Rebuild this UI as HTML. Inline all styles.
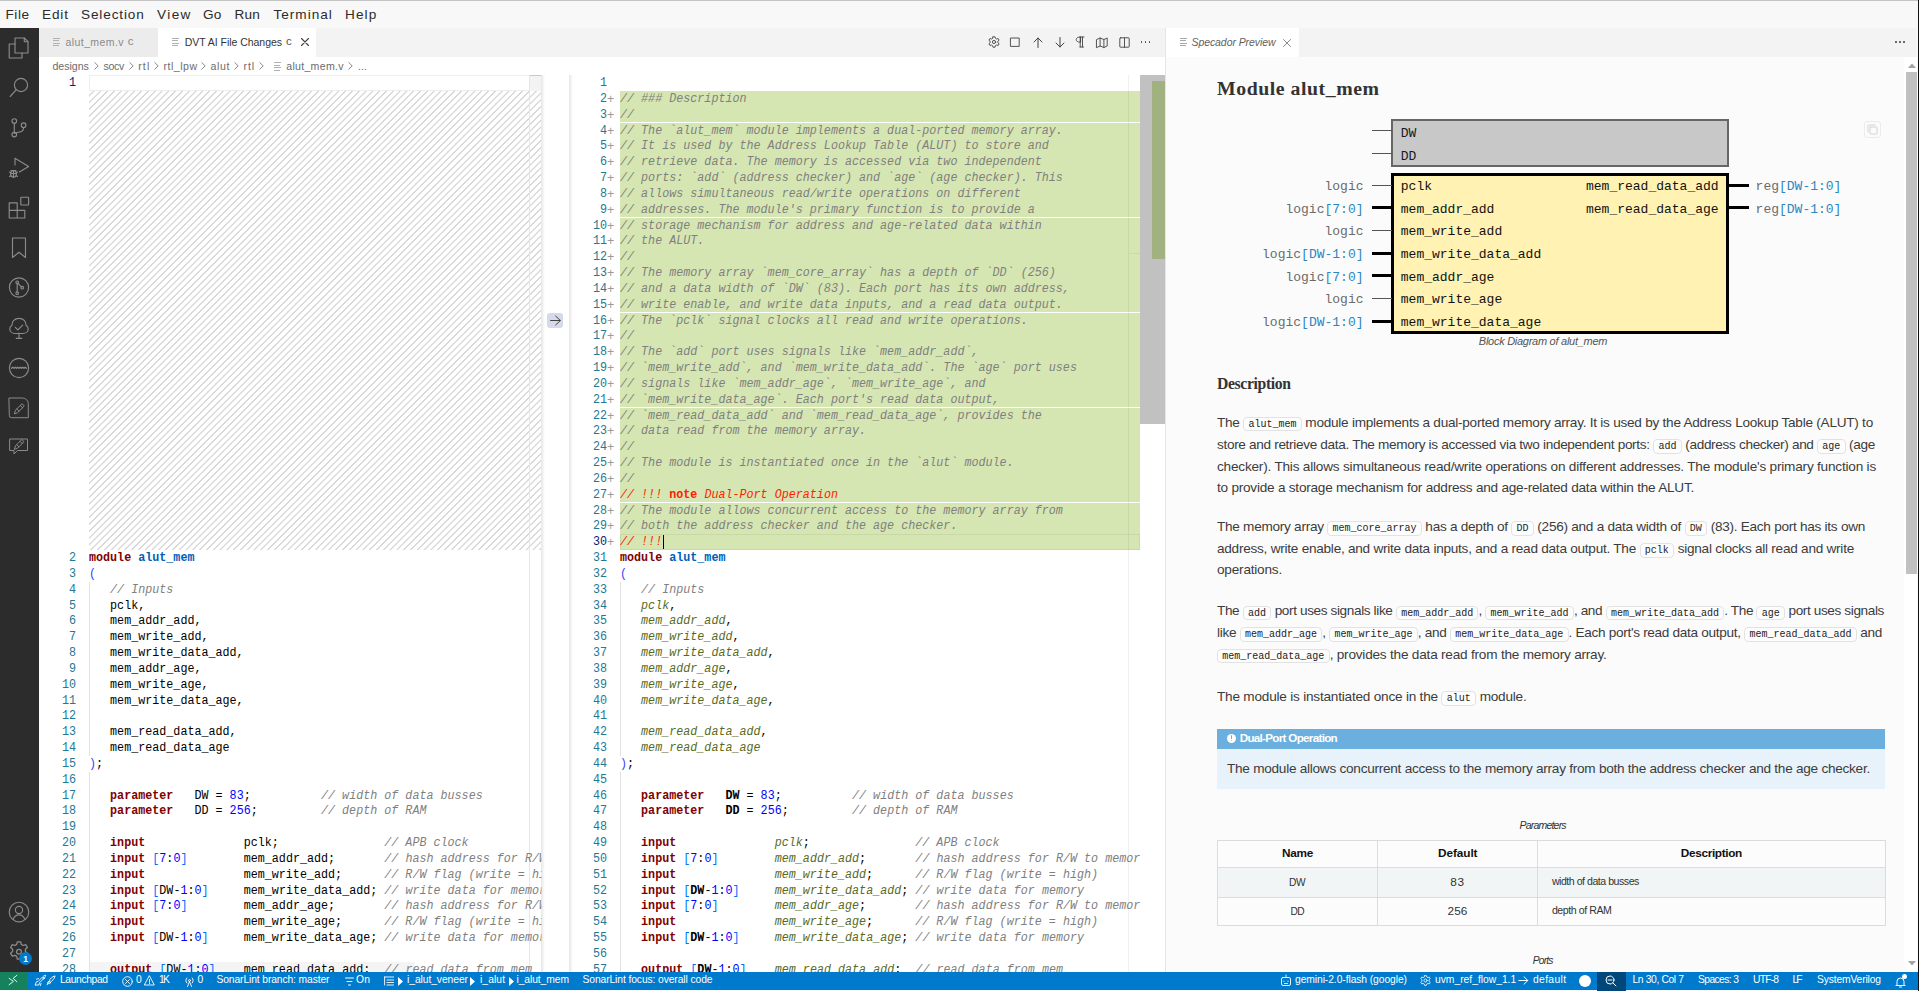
<!DOCTYPE html><html><head><meta charset="utf-8"><title>VS Code</title><style>
*{margin:0;padding:0;box-sizing:border-box}
html,body{width:1919px;height:991px;overflow:hidden;background:#fff;position:relative}
body{font-family:"Liberation Sans",sans-serif}
.t{position:absolute;white-space:pre}
.r{position:absolute}
.ln{position:absolute;height:15.8333px;line-height:15.8333px;text-align:right;font-family:"Liberation Mono",monospace;font-size:12.3px;padding-top:1px;transform:scaleX(0.9526);transform-origin:right center}
.pl{position:absolute;height:15.8333px;line-height:15.8333px;font-family:"Liberation Mono",monospace;font-size:12.8px;color:#9a9a9a;padding-top:1px;transform:scaleX(0.9526);transform-origin:left center}
.cl{position:absolute;height:15.8333px;line-height:15.8333px;white-space:pre;overflow:hidden;font-family:"Liberation Mono",monospace;font-size:12.3px;color:#000;padding-top:1px;transform:scaleX(0.9526);transform-origin:left center}
svg{position:absolute;overflow:visible}
.ic{font-family:'Liberation Mono',monospace;font-size:10px;border:1px solid #e2e2e2;border-radius:4px;background:#fdfdfd;padding:0.9px 4.3px;margin:0;color:#222;letter-spacing:0}
</style></head><body><div class="r" style="left:0.00px;top:0.00px;width:1919.00px;height:28.00px;background:#f8f8f8;"></div><div class="r" style="left:0.00px;top:0.00px;width:1919.00px;height:1.00px;background:#c4c4c4;"></div><div class="t" style="left:5.50px;top:7.13px;font-family:'Liberation Sans', sans-serif;font-size:13.60px;line-height:16.32px;color:#2b2b2b;font-weight:normal;font-style:normal;letter-spacing:0.531px">File</div><div class="t" style="left:42.00px;top:7.13px;font-family:'Liberation Sans', sans-serif;font-size:13.60px;line-height:16.32px;color:#2b2b2b;font-weight:normal;font-style:normal;letter-spacing:0.854px">Edit</div><div class="t" style="left:81.00px;top:7.13px;font-family:'Liberation Sans', sans-serif;font-size:13.60px;line-height:16.32px;color:#2b2b2b;font-weight:normal;font-style:normal;letter-spacing:0.860px">Selection</div><div class="t" style="left:157.00px;top:7.13px;font-family:'Liberation Sans', sans-serif;font-size:13.60px;line-height:16.32px;color:#2b2b2b;font-weight:normal;font-style:normal;letter-spacing:1.394px">View</div><div class="t" style="left:203.00px;top:7.13px;font-family:'Liberation Sans', sans-serif;font-size:13.60px;line-height:16.32px;color:#2b2b2b;font-weight:normal;font-style:normal;letter-spacing:0.259px">Go</div><div class="t" style="left:234.50px;top:7.13px;font-family:'Liberation Sans', sans-serif;font-size:13.60px;line-height:16.32px;color:#2b2b2b;font-weight:normal;font-style:normal;letter-spacing:0.181px">Run</div><div class="t" style="left:273.60px;top:7.13px;font-family:'Liberation Sans', sans-serif;font-size:13.60px;line-height:16.32px;color:#2b2b2b;font-weight:normal;font-style:normal;letter-spacing:0.961px">Terminal</div><div class="t" style="left:345.00px;top:7.13px;font-family:'Liberation Sans', sans-serif;font-size:13.60px;line-height:16.32px;color:#2b2b2b;font-weight:normal;font-style:normal;letter-spacing:1.110px">Help</div><div class="r" style="left:0.00px;top:28.00px;width:39.00px;height:944.00px;background:#2c2c2c;"></div><div class="r" style="left:39.00px;top:28.00px;width:1126.00px;height:29.00px;background:#f3f3f3;"></div><div class="r" style="left:39.00px;top:28.00px;width:118.70px;height:29.00px;background:#ececec;"></div><div class="r" style="left:157.70px;top:28.00px;width:158.00px;height:29.00px;background:#ffffff;"></div><div class="r" style="left:39.00px;top:57.00px;width:1126.00px;height:915.00px;background:#ffffff;"></div><div class="r" style="left:1165.00px;top:28.00px;width:1.00px;height:944.00px;background:#e5e5e5;"></div><div class="r" style="left:1166.00px;top:28.00px;width:753.00px;height:29.00px;background:#f3f3f3;"></div><div class="r" style="left:1166.00px;top:28.00px;width:132.80px;height:29.00px;background:#ffffff;"></div><div class="r" style="left:1166.00px;top:57.00px;width:753.00px;height:915.00px;background:#fbfbfb;"></div><div class="r" style="left:0.00px;top:972.00px;width:1919.00px;height:18.00px;background:#007acc;"></div><div class="r" style="left:0.00px;top:972.00px;width:27.00px;height:18.00px;background:#16825d;"></div><div class="r" style="left:0.00px;top:990.00px;width:1919.00px;height:1.00px;background:#f8f8f8;"></div><svg style="left:0.00px;top:28.00px" width="39" height="40" viewBox="0 0 39 40" fill="none" stroke="#8b8b8b" stroke-width="1.15" stroke-linecap="round" stroke-linejoin="round"><path d="M15 10h9.3l3.7 3.7V25H15z"/><path d="M24.3 10v3.7H28"/><path d="M15 16H9.2v14H22v-5"/></svg><svg style="left:0.00px;top:68.00px" width="39" height="40" viewBox="0 0 39 40" fill="none" stroke="#8b8b8b" stroke-width="1.15" stroke-linecap="round" stroke-linejoin="round"><circle cx="21" cy="17" r="6.6"/><path d="M16.3 21.7L10.2 28.5"/></svg><svg style="left:0.00px;top:108.00px" width="39" height="40" viewBox="0 0 39 40" fill="none" stroke="#8b8b8b" stroke-width="1.15" stroke-linecap="round" stroke-linejoin="round"><circle cx="14.3" cy="13" r="2.3"/><circle cx="14.3" cy="26.6" r="2.3"/><circle cx="23.6" cy="17.2" r="2.3"/><path d="M14.3 15.3v9M23.6 19.5c0 3.5-2.5 4.5-5 4.8-2 .2-3.5 .5-4 1"/></svg><svg style="left:0.00px;top:148.00px" width="39" height="40" viewBox="0 0 39 40" fill="none" stroke="#8b8b8b" stroke-width="1.15" stroke-linecap="round" stroke-linejoin="round"><path d="M15 17V10.2l13.6 8.2-9.2 5.6"/><path d="M11 22.6h5M10.6 25.5h5.8M13.5 22.6v6.5"/><ellipse cx="13.5" cy="25.8" rx="2.9" ry="3.3"/><path d="M9.5 24l1.3.8M17.5 24l-1.3.8M9.5 28.5l1.3-.8M17.5 28.5l-1.3-.8"/></svg><svg style="left:0.00px;top:188.00px" width="39" height="40" viewBox="0 0 39 40" fill="none" stroke="#8b8b8b" stroke-width="1.15" stroke-linecap="round" stroke-linejoin="round"><path d="M9.2 14.8h8v7.6h7.6v7.6H9.2z M9.2 22.4h8v7.6M17.2 22.4v7.6"/><rect x="20.8" y="9.2" width="7.8" height="7.8" rx=".5"/></svg><svg style="left:0.00px;top:228.00px" width="39" height="40" viewBox="0 0 39 40" fill="none" stroke="#8b8b8b" stroke-width="1.15" stroke-linecap="round" stroke-linejoin="round"><path d="M12.5 10h13v19.5l-6.5-5.2-6.5 5.2z"/></svg><svg style="left:0.00px;top:268.00px" width="39" height="40" viewBox="0 0 39 40" fill="none" stroke="#8b8b8b" stroke-width="1.15" stroke-linecap="round" stroke-linejoin="round"><circle cx="19" cy="19.5" r="9.6"/><circle cx="17.2" cy="25.2" r="1.3"/><circle cx="17.2" cy="14.3" r="1.3"/><circle cx="22.2" cy="19.7" r="1.3"/><path d="M17.2 15.6v8.3M17.9 15.4l3.5 3.5"/></svg><svg style="left:0.00px;top:308.00px" width="39" height="40" viewBox="0 0 39 40" fill="none" stroke="#8b8b8b" stroke-width="1.15" stroke-linecap="round" stroke-linejoin="round"><path d="M19 25v5.3M16.2 30.3h5.6"/><path d="M15 25.5c-3 0-5.2-2-5.2-4.6 0-1.6.9-3 2.2-3.7-.3-3.6 2.6-6.8 7-6.8s7.3 3.2 7 6.8c1.3.7 2.2 2.1 2.2 3.7 0 2.6-2.2 4.6-5.2 4.6z"/><path d="M15.3 19.3l2.6 2.6 4.8-4.8"/></svg><svg style="left:0.00px;top:348.00px" width="39" height="40" viewBox="0 0 39 40" fill="none" stroke="#8b8b8b" stroke-width="1.15" stroke-linecap="round" stroke-linejoin="round"><circle cx="19" cy="20" r="9.6"/><path d="M11.5 20.3l1.25-1.1 1.25 1.1 1.25-1.1 1.25 1.1 1.25-1.1 1.25 1.1 1.25-1.1 1.25 1.1 1.25-1.1 1.25 1.1 1.25-1.1 1.25 1.1"/></svg><svg style="left:0.00px;top:388.00px" width="39" height="40" viewBox="0 0 39 40" fill="none" stroke="#8b8b8b" stroke-width="1" stroke-linecap="round" stroke-linejoin="round"><path d="M9.3 10h13.2a5.8 5.8 0 0 1 5.8 5.8V29.7H11.3a2 2 0 0 1-2-2z"/><path d="M14.5 25.5l1-3.3 6.5-6.5 2.3 2.3-6.5 6.5zM16.8 21l2.3 2.3M20.3 17.5l2.3 2.3"/></svg><svg style="left:0.00px;top:428.00px" width="39" height="40" viewBox="0 0 39 40" fill="none" stroke="#8b8b8b" stroke-width="1" stroke-linecap="round" stroke-linejoin="round"><path d="M10 11h17.5v11.5H17.5l-3.5 3.5v-3.5H10z"/><path d="M14.5 21l1-3.2 6.3-6.3 2.2 2.2-6.3 6.3zM16.7 16.7l2.2 2.2M20 13.4l2.2 2.2"/></svg><svg style="left:0.00px;top:892.00px" width="39" height="40" viewBox="0 0 39 40" fill="none" stroke="#8b8b8b" stroke-width="1.15" stroke-linecap="round" stroke-linejoin="round"><circle cx="19" cy="20" r="9.8"/><circle cx="19" cy="18" r="3.6"/><path d="M13.2 27.2c1-2.8 3.2-4.4 5.8-4.4s4.8 1.6 5.8 4.4"/></svg><svg style="left:0.00px;top:932.00px" width="39" height="40" viewBox="0 0 39 40" fill="none" stroke="#8b8b8b" stroke-width="1.3" stroke-linecap="round" stroke-linejoin="round"><circle cx="19" cy="19.7" r="2.4"/><path d="M17.3 9.8h3.4l.6 2.6 1.9 1.1 2.5-.9 1.7 2.9-2 1.8v2.2l2 1.8-1.7 2.9-2.5-.9-1.9 1.1-.6 2.6h-3.4l-.6-2.6-1.9-1.1-2.5.9-1.7-2.9 2-1.8v-2.2l-2-1.8 1.7-2.9 2.5.9 1.9-1.1z"/></svg><div class="r" style="left:19.00px;top:951.80px;width:13.00px;height:13.00px;background:#007acc;border-radius:50%"></div><div class="t" style="left:25.50px;transform:translateX(-50%);top:953.55px;font-family:'Liberation Sans', sans-serif;font-size:8.50px;line-height:10.20px;color:#ffffff;font-weight:bold;font-style:normal">1</div><div class="r" style="left:53.00px;top:38.00px;width:7.00px;height:1.00px;background:#b0b0b0;"></div><div class="r" style="left:53.00px;top:40.45px;width:6.00px;height:1.00px;background:#b0b0b0;"></div><div class="r" style="left:53.00px;top:42.90px;width:7.00px;height:1.00px;background:#b0b0b0;"></div><div class="r" style="left:53.00px;top:45.35px;width:6.00px;height:1.00px;background:#b0b0b0;"></div><div class="t" style="left:65.60px;top:35.56px;font-family:'Liberation Sans', sans-serif;font-size:10.50px;line-height:12.60px;color:#8a8a8a;font-weight:normal;font-style:normal;letter-spacing:0.402px">alut_mem.v</div><div class="t" style="left:127.70px;top:34.72px;font-family:'Liberation Sans', sans-serif;font-size:11.50px;line-height:13.80px;color:#8a8a8a;font-weight:normal;font-style:normal">c</div><div class="r" style="left:171.50px;top:38.00px;width:7.00px;height:1.00px;background:#b0b0b0;"></div><div class="r" style="left:171.50px;top:40.45px;width:6.00px;height:1.00px;background:#b0b0b0;"></div><div class="r" style="left:171.50px;top:42.90px;width:7.00px;height:1.00px;background:#b0b0b0;"></div><div class="r" style="left:171.50px;top:45.35px;width:6.00px;height:1.00px;background:#b0b0b0;"></div><div class="t" style="left:184.80px;top:35.56px;font-family:'Liberation Sans', sans-serif;font-size:10.50px;line-height:12.60px;color:#333333;font-weight:normal;font-style:normal;letter-spacing:-0.037px">DVT AI File Changes</div><div class="t" style="left:286.00px;top:34.72px;font-family:'Liberation Sans', sans-serif;font-size:11.50px;line-height:13.80px;color:#555555;font-weight:normal;font-style:normal">c</div><svg style="left:300.50px;top:38.00px" width="8" height="8" viewBox="0 0 8 8" fill="none" stroke="#424242" stroke-width="1.1" stroke-linecap="round" stroke-linejoin="round"><path d="M0.5 0.5l7 7M7.5 0.5l-7 7"/></svg><div class="r" style="left:1180.00px;top:38.00px;width:7.00px;height:1.00px;background:#a8a8a8;"></div><div class="r" style="left:1180.00px;top:40.45px;width:6.00px;height:1.00px;background:#a8a8a8;"></div><div class="r" style="left:1180.00px;top:42.90px;width:7.00px;height:1.00px;background:#a8a8a8;"></div><div class="r" style="left:1180.00px;top:45.35px;width:6.00px;height:1.00px;background:#a8a8a8;"></div><div class="t" style="left:1191.50px;top:35.56px;font-family:'Liberation Sans', sans-serif;font-size:10.50px;line-height:12.60px;color:#5f5f5f;font-weight:normal;font-style:italic;letter-spacing:-0.081px">Specador Preview</div><svg style="left:1283.00px;top:38.50px" width="8" height="8" viewBox="0 0 8 8" fill="none" stroke="#8a8a8a" stroke-width="1" stroke-linecap="round" stroke-linejoin="round"><path d="M0.5 0.5l7 7M7.5 0.5l-7 7"/></svg><div class="r" style="left:1895.10px;top:41.30px;width:1.80px;height:1.80px;background:#424242;border-radius:50%"></div><div class="r" style="left:1899.10px;top:41.30px;width:1.80px;height:1.80px;background:#424242;border-radius:50%"></div><div class="r" style="left:1903.10px;top:41.30px;width:1.80px;height:1.80px;background:#424242;border-radius:50%"></div><svg style="left:988.40px;top:36.00px" width="12" height="12" viewBox="0 0 12 12" fill="none" stroke="#424242" stroke-width="0.9" stroke-linecap="round" stroke-linejoin="round"><circle cx="6" cy="6" r="1.6"/><path d="M5 .8h2l.4 1.5 1.2.7 1.5-.5 1 1.7-1.2 1v1.6l1.2 1-1 1.7-1.5-.5-1.2.7L7 11.2H5l-.4-1.5-1.2-.7-1.5.5-1-1.7 1.2-1V5.2L.9 4.2l1-1.7 1.5.5 1.2-.7z"/></svg><svg style="left:1010.30px;top:37.00px" width="10" height="10" viewBox="0 0 10 10" fill="none" stroke="#424242" stroke-width="0.9" stroke-linecap="round" stroke-linejoin="round"><rect x="0.8" y="1" width="8.4" height="8.4"/></svg><svg style="left:1033.20px;top:36.50px" width="10" height="11" viewBox="0 0 10 11" fill="none" stroke="#424242" stroke-width="1" stroke-linecap="round" stroke-linejoin="round"><path d="M5 10.5V1M1 5l4-4 4 4"/></svg><svg style="left:1054.70px;top:36.50px" width="10" height="11" viewBox="0 0 10 11" fill="none" stroke="#424242" stroke-width="1" stroke-linecap="round" stroke-linejoin="round"><path d="M5 .5V10M1 6l4 4 4-4"/></svg><svg style="left:1075.00px;top:36.00px" width="10" height="12" viewBox="0 0 10 12" fill="none" stroke="#424242" stroke-width="0.9" stroke-linecap="round" stroke-linejoin="round"><path d="M5 1h4M5.2 1v10M7.5 1v10M5.2 6.2C2.5 6.2 1.2 5 1.2 3.6S2.5 1 5.2 1z"/><path d="M5 11h3.5"/></svg><svg style="left:1096.30px;top:36.50px" width="12" height="11" viewBox="0 0 12 11" fill="none" stroke="#424242" stroke-width="0.9" stroke-linecap="round" stroke-linejoin="round"><path d="M.8 2.5l3.3-1.5 3.8 1.5 3.3-1.5v8l-3.3 1.5-3.8-1.5L.8 10.5z M4.1 1v8M7.9 2.5v8"/></svg><svg style="left:1119.00px;top:36.50px" width="11" height="11" viewBox="0 0 11 11" fill="none" stroke="#424242" stroke-width="0.9" stroke-linecap="round" stroke-linejoin="round"><rect x=".8" y=".8" width="9.4" height="9.4" rx=".6"/><path d="M5.5 .8v9.4"/></svg><div class="r" style="left:1140.60px;top:41.30px;width:1.80px;height:1.80px;background:#424242;border-radius:50%"></div><div class="r" style="left:1144.60px;top:41.30px;width:1.80px;height:1.80px;background:#424242;border-radius:50%"></div><div class="r" style="left:1148.60px;top:41.30px;width:1.80px;height:1.80px;background:#424242;border-radius:50%"></div><div class="t" style="left:52.50px;top:59.57px;font-family:'Liberation Sans', sans-serif;font-size:10.60px;line-height:12.72px;color:#6c6c6c;font-weight:normal;font-style:normal;letter-spacing:-0.036px">designs</div><div class="t" style="left:103.40px;top:59.57px;font-family:'Liberation Sans', sans-serif;font-size:10.60px;line-height:12.72px;color:#6c6c6c;font-weight:normal;font-style:normal;letter-spacing:-0.299px">socv</div><div class="t" style="left:138.20px;top:59.57px;font-family:'Liberation Sans', sans-serif;font-size:10.60px;line-height:12.72px;color:#6c6c6c;font-weight:normal;font-style:normal;letter-spacing:1.136px">rtl</div><div class="t" style="left:163.40px;top:59.57px;font-family:'Liberation Sans', sans-serif;font-size:10.60px;line-height:12.72px;color:#6c6c6c;font-weight:normal;font-style:normal;letter-spacing:0.529px">rtl_lpw</div><div class="t" style="left:210.60px;top:59.57px;font-family:'Liberation Sans', sans-serif;font-size:10.60px;line-height:12.72px;color:#6c6c6c;font-weight:normal;font-style:normal;letter-spacing:0.602px">alut</div><div class="t" style="left:243.40px;top:59.57px;font-family:'Liberation Sans', sans-serif;font-size:10.60px;line-height:12.72px;color:#6c6c6c;font-weight:normal;font-style:normal;letter-spacing:0.986px">rtl</div><div class="t" style="left:286.30px;top:59.57px;font-family:'Liberation Sans', sans-serif;font-size:10.60px;line-height:12.72px;color:#6c6c6c;font-weight:normal;font-style:normal;letter-spacing:0.270px">alut_mem.v</div><svg style="left:94.00px;top:62.00px" width="5" height="8" viewBox="0 0 5 8" fill="none" stroke="#7a7a7a" stroke-width="0.9" stroke-linecap="round" stroke-linejoin="round"><path d="M.8 .6L4.2 3.9 .8 7.2"/></svg><svg style="left:128.50px;top:62.00px" width="5" height="8" viewBox="0 0 5 8" fill="none" stroke="#7a7a7a" stroke-width="0.9" stroke-linecap="round" stroke-linejoin="round"><path d="M.8 .6L4.2 3.9 .8 7.2"/></svg><svg style="left:153.50px;top:62.00px" width="5" height="8" viewBox="0 0 5 8" fill="none" stroke="#7a7a7a" stroke-width="0.9" stroke-linecap="round" stroke-linejoin="round"><path d="M.8 .6L4.2 3.9 .8 7.2"/></svg><svg style="left:201.00px;top:62.00px" width="5" height="8" viewBox="0 0 5 8" fill="none" stroke="#7a7a7a" stroke-width="0.9" stroke-linecap="round" stroke-linejoin="round"><path d="M.8 .6L4.2 3.9 .8 7.2"/></svg><svg style="left:234.00px;top:62.00px" width="5" height="8" viewBox="0 0 5 8" fill="none" stroke="#7a7a7a" stroke-width="0.9" stroke-linecap="round" stroke-linejoin="round"><path d="M.8 .6L4.2 3.9 .8 7.2"/></svg><svg style="left:259.30px;top:62.00px" width="5" height="8" viewBox="0 0 5 8" fill="none" stroke="#7a7a7a" stroke-width="0.9" stroke-linecap="round" stroke-linejoin="round"><path d="M.8 .6L4.2 3.9 .8 7.2"/></svg><svg style="left:347.80px;top:62.00px" width="5" height="8" viewBox="0 0 5 8" fill="none" stroke="#7a7a7a" stroke-width="0.9" stroke-linecap="round" stroke-linejoin="round"><path d="M.8 .6L4.2 3.9 .8 7.2"/></svg><div class="r" style="left:274.40px;top:62.30px;width:7.00px;height:1.00px;background:#b0b0b0;"></div><div class="r" style="left:274.40px;top:64.75px;width:6.00px;height:1.00px;background:#b0b0b0;"></div><div class="r" style="left:274.40px;top:67.20px;width:7.00px;height:1.00px;background:#b0b0b0;"></div><div class="r" style="left:274.40px;top:69.65px;width:6.00px;height:1.00px;background:#b0b0b0;"></div><div class="t" style="left:358.00px;top:59.57px;font-family:'Liberation Sans', sans-serif;font-size:10.60px;line-height:12.72px;color:#6c6c6c;font-weight:normal;font-style:normal;letter-spacing:0.078px">...</div><div class="r" style="left:89.00px;top:75.00px;width:452.00px;height:15.83px;background:#ffffff;border:1px solid #eeeeee"></div><div class="r" style="left:89.00px;top:90.83px;width:452.00px;height:459.17px;background:#ffffff;background-image:repeating-linear-gradient(-45deg,rgba(200,200,200,0) 0px,rgba(216,216,216,1) 0.45px,rgba(216,216,216,1) 1.35px,rgba(200,200,200,0) 1.8px,rgba(200,200,200,0) 4.81px)"></div><div class="r" style="left:529.00px;top:75.00px;width:1.00px;height:897.00px;background:#e6e6e6;"></div><div class="r" style="left:530.00px;top:75.00px;width:11.00px;height:15.83px;background:#f3f3f3;border-top:1px solid #c8c8c8"></div><div class="r" style="left:541.00px;top:75.00px;width:4.00px;height:897.00px;background:linear-gradient(to right, rgba(0,0,0,0.10), rgba(0,0,0,0));"></div><div class="r" style="left:89.00px;top:961.50px;width:326.00px;height:10.50px;background:rgba(100,100,100,0.07);"></div><div class="r" style="left:89.00px;top:581.67px;width:1.00px;height:174.17px;background:#e3e3e3;"></div><div class="r" style="left:89.00px;top:771.67px;width:1.00px;height:200.33px;background:#e3e3e3;"></div><div class="ln" style="top:75.00px;left:35.50px;width:40px;color:#0b216f">1</div><div class="cl" style="top:75.00px;left:89.0px;width:474.8px"></div><div class="ln" style="top:550.00px;left:35.50px;width:40px;color:#237893">2</div><div class="cl" style="top:550.00px;left:89.0px;width:474.8px"><span style="color:#800000;font-weight:bold">module</span> <span style="color:#0060b8;font-weight:bold">alut_mem</span></div><div class="ln" style="top:565.83px;left:35.50px;width:40px;color:#237893">3</div><div class="cl" style="top:565.83px;left:89.0px;width:474.8px"><span style="color:#4040ff">(</span></div><div class="ln" style="top:581.67px;left:35.50px;width:40px;color:#237893">4</div><div class="cl" style="top:581.67px;left:89.0px;width:474.8px">   <span style="color:#808080;font-style:italic">// Inputs</span></div><div class="ln" style="top:597.50px;left:35.50px;width:40px;color:#237893">5</div><div class="cl" style="top:597.50px;left:89.0px;width:474.8px">   pclk,</div><div class="ln" style="top:613.33px;left:35.50px;width:40px;color:#237893">6</div><div class="cl" style="top:613.33px;left:89.0px;width:474.8px">   mem_addr_add,</div><div class="ln" style="top:629.17px;left:35.50px;width:40px;color:#237893">7</div><div class="cl" style="top:629.17px;left:89.0px;width:474.8px">   mem_write_add,</div><div class="ln" style="top:645.00px;left:35.50px;width:40px;color:#237893">8</div><div class="cl" style="top:645.00px;left:89.0px;width:474.8px">   mem_write_data_add,</div><div class="ln" style="top:660.83px;left:35.50px;width:40px;color:#237893">9</div><div class="cl" style="top:660.83px;left:89.0px;width:474.8px">   mem_addr_age,</div><div class="ln" style="top:676.67px;left:35.50px;width:40px;color:#237893">10</div><div class="cl" style="top:676.67px;left:89.0px;width:474.8px">   mem_write_age,</div><div class="ln" style="top:692.50px;left:35.50px;width:40px;color:#237893">11</div><div class="cl" style="top:692.50px;left:89.0px;width:474.8px">   mem_write_data_age,</div><div class="ln" style="top:708.33px;left:35.50px;width:40px;color:#237893">12</div><div class="cl" style="top:708.33px;left:89.0px;width:474.8px"></div><div class="ln" style="top:724.17px;left:35.50px;width:40px;color:#237893">13</div><div class="cl" style="top:724.17px;left:89.0px;width:474.8px">   mem_read_data_add,</div><div class="ln" style="top:740.00px;left:35.50px;width:40px;color:#237893">14</div><div class="cl" style="top:740.00px;left:89.0px;width:474.8px">   mem_read_data_age</div><div class="ln" style="top:755.83px;left:35.50px;width:40px;color:#237893">15</div><div class="cl" style="top:755.83px;left:89.0px;width:474.8px"><span style="color:#4040ff">)</span>;</div><div class="ln" style="top:771.67px;left:35.50px;width:40px;color:#237893">16</div><div class="cl" style="top:771.67px;left:89.0px;width:474.8px"></div><div class="ln" style="top:787.50px;left:35.50px;width:40px;color:#237893">17</div><div class="cl" style="top:787.50px;left:89.0px;width:474.8px">   <span style="color:#800000;font-weight:bold">parameter</span>   DW = <span style="color:#0000ff">83</span>;          <span style="color:#808080;font-style:italic">// width of data busses</span></div><div class="ln" style="top:803.33px;left:35.50px;width:40px;color:#237893">18</div><div class="cl" style="top:803.33px;left:89.0px;width:474.8px">   <span style="color:#800000;font-weight:bold">parameter</span>   DD = <span style="color:#0000ff">256</span>;         <span style="color:#808080;font-style:italic">// depth of RAM</span></div><div class="ln" style="top:819.17px;left:35.50px;width:40px;color:#237893">19</div><div class="cl" style="top:819.17px;left:89.0px;width:474.8px"></div><div class="ln" style="top:835.00px;left:35.50px;width:40px;color:#237893">20</div><div class="cl" style="top:835.00px;left:89.0px;width:474.8px">   <span style="color:#800000;font-weight:bold">input</span>              pclk;               <span style="color:#808080;font-style:italic">// APB clock</span></div><div class="ln" style="top:850.83px;left:35.50px;width:40px;color:#237893">21</div><div class="cl" style="top:850.83px;left:89.0px;width:474.8px">   <span style="color:#800000;font-weight:bold">input</span> <span style="color:#0070ff">[</span><span style="color:#0000ff">7</span>:<span style="color:#0000ff">0</span><span style="color:#0070ff">]</span>        mem_addr_add;       <span style="color:#808080;font-style:italic">// hash address for R/W to memory</span></div><div class="ln" style="top:866.66px;left:35.50px;width:40px;color:#237893">22</div><div class="cl" style="top:866.66px;left:89.0px;width:474.8px">   <span style="color:#800000;font-weight:bold">input</span>              mem_write_add;      <span style="color:#808080;font-style:italic">// R/W flag (write = high)</span></div><div class="ln" style="top:882.50px;left:35.50px;width:40px;color:#237893">23</div><div class="cl" style="top:882.50px;left:89.0px;width:474.8px">   <span style="color:#800000;font-weight:bold">input</span> <span style="color:#0070ff">[</span>DW-<span style="color:#0000ff">1</span>:<span style="color:#0000ff">0</span><span style="color:#0070ff">]</span>     mem_write_data_add; <span style="color:#808080;font-style:italic">// write data for memory</span></div><div class="ln" style="top:898.33px;left:35.50px;width:40px;color:#237893">24</div><div class="cl" style="top:898.33px;left:89.0px;width:474.8px">   <span style="color:#800000;font-weight:bold">input</span> <span style="color:#0070ff">[</span><span style="color:#0000ff">7</span>:<span style="color:#0000ff">0</span><span style="color:#0070ff">]</span>        mem_addr_age;       <span style="color:#808080;font-style:italic">// hash address for R/W to memory</span></div><div class="ln" style="top:914.16px;left:35.50px;width:40px;color:#237893">25</div><div class="cl" style="top:914.16px;left:89.0px;width:474.8px">   <span style="color:#800000;font-weight:bold">input</span>              mem_write_age;      <span style="color:#808080;font-style:italic">// R/W flag (write = high)</span></div><div class="ln" style="top:930.00px;left:35.50px;width:40px;color:#237893">26</div><div class="cl" style="top:930.00px;left:89.0px;width:474.8px">   <span style="color:#800000;font-weight:bold">input</span> <span style="color:#0070ff">[</span>DW-<span style="color:#0000ff">1</span>:<span style="color:#0000ff">0</span><span style="color:#0070ff">]</span>     mem_write_data_age; <span style="color:#808080;font-style:italic">// write data for memory</span></div><div class="ln" style="top:945.83px;left:35.50px;width:40px;color:#237893">27</div><div class="cl" style="top:945.83px;left:89.0px;width:474.8px"></div><div class="ln" style="top:961.66px;left:35.50px;width:40px;color:#237893">28</div><div class="cl" style="top:961.66px;left:89.0px;width:474.8px">   <span style="color:#800000;font-weight:bold">output</span> <span style="color:#0070ff">[</span>DW-<span style="color:#0000ff">1</span>:<span style="color:#0000ff">0</span><span style="color:#0070ff">]</span>    mem_read_data_add;  <span style="color:#808080;font-style:italic">// read data from mem</span></div><div class="r" style="left:547.00px;top:313.00px;width:16.00px;height:15.00px;background:#d5daea;border-radius:3px"></div><svg style="left:547px;top:313px" width="16" height="15" viewBox="0 0 16 15"><path d="M3.2 7.5h10.2M8.4 2.8l5 4.7-5 4.7" fill="none" stroke="#3a3a3a" stroke-width="0.95"/></svg><div class="r" style="left:568.50px;top:75.00px;width:4.50px;height:897.00px;background:linear-gradient(to right, rgba(0,0,0,0.10), rgba(0,0,0,0));"></div><div class="r" style="left:620.00px;top:90.83px;width:520.00px;height:459.17px;background:#d6e6b2;"></div><div class="r" style="left:620.00px;top:122.00px;width:520.00px;height:1.00px;background:#ffffff;"></div><div class="r" style="left:620.00px;top:217.00px;width:520.00px;height:1.00px;background:#ffffff;"></div><div class="r" style="left:620.00px;top:312.00px;width:520.00px;height:1.00px;background:#ffffff;"></div><div class="r" style="left:620.00px;top:407.00px;width:520.00px;height:1.00px;background:#ffffff;"></div><div class="r" style="left:620.00px;top:502.00px;width:520.00px;height:1.00px;background:#ffffff;"></div><div class="r" style="left:620.00px;top:534.17px;width:520.00px;height:15.83px;background:transparent;border:1px solid rgba(0,0,0,0.06)"></div><div class="r" style="left:620.00px;top:581.67px;width:1.00px;height:174.17px;background:#e3e3e3;"></div><div class="r" style="left:620.00px;top:771.67px;width:1.00px;height:200.33px;background:#e3e3e3;"></div><div class="ln" style="top:75.00px;left:566.70px;width:40px;color:#237893">1</div><div class="cl" style="top:75.00px;left:620.0px;width:545.9px"></div><div class="ln" style="top:90.83px;left:566.70px;width:40px;color:#237893">2</div><div class="pl" style="top:90.83px;left:607.3px">+</div><div class="cl" style="top:90.83px;left:620.0px;width:545.9px"><span style="color:#808080;font-style:italic">// ### Description</span></div><div class="ln" style="top:106.67px;left:566.70px;width:40px;color:#237893">3</div><div class="pl" style="top:106.67px;left:607.3px">+</div><div class="cl" style="top:106.67px;left:620.0px;width:545.9px"><span style="color:#808080;font-style:italic">//</span></div><div class="ln" style="top:122.50px;left:566.70px;width:40px;color:#237893">4</div><div class="pl" style="top:122.50px;left:607.3px">+</div><div class="cl" style="top:122.50px;left:620.0px;width:545.9px"><span style="color:#808080;font-style:italic">// The `alut_mem` module implements a dual-ported memory array.</span></div><div class="ln" style="top:138.33px;left:566.70px;width:40px;color:#237893">5</div><div class="pl" style="top:138.33px;left:607.3px">+</div><div class="cl" style="top:138.33px;left:620.0px;width:545.9px"><span style="color:#808080;font-style:italic">// It is used by the Address Lookup Table (ALUT) to store and</span></div><div class="ln" style="top:154.17px;left:566.70px;width:40px;color:#237893">6</div><div class="pl" style="top:154.17px;left:607.3px">+</div><div class="cl" style="top:154.17px;left:620.0px;width:545.9px"><span style="color:#808080;font-style:italic">// retrieve data. The memory is accessed via two independent</span></div><div class="ln" style="top:170.00px;left:566.70px;width:40px;color:#237893">7</div><div class="pl" style="top:170.00px;left:607.3px">+</div><div class="cl" style="top:170.00px;left:620.0px;width:545.9px"><span style="color:#808080;font-style:italic">// ports: `add` (address checker) and `age` (age checker). This</span></div><div class="ln" style="top:185.83px;left:566.70px;width:40px;color:#237893">8</div><div class="pl" style="top:185.83px;left:607.3px">+</div><div class="cl" style="top:185.83px;left:620.0px;width:545.9px"><span style="color:#808080;font-style:italic">// allows simultaneous read/write operations on different</span></div><div class="ln" style="top:201.67px;left:566.70px;width:40px;color:#237893">9</div><div class="pl" style="top:201.67px;left:607.3px">+</div><div class="cl" style="top:201.67px;left:620.0px;width:545.9px"><span style="color:#808080;font-style:italic">// addresses. The module's primary function is to provide a</span></div><div class="ln" style="top:217.50px;left:566.70px;width:40px;color:#237893">10</div><div class="pl" style="top:217.50px;left:607.3px">+</div><div class="cl" style="top:217.50px;left:620.0px;width:545.9px"><span style="color:#808080;font-style:italic">// storage mechanism for address and age-related data within</span></div><div class="ln" style="top:233.33px;left:566.70px;width:40px;color:#237893">11</div><div class="pl" style="top:233.33px;left:607.3px">+</div><div class="cl" style="top:233.33px;left:620.0px;width:545.9px"><span style="color:#808080;font-style:italic">// the ALUT.</span></div><div class="ln" style="top:249.17px;left:566.70px;width:40px;color:#237893">12</div><div class="pl" style="top:249.17px;left:607.3px">+</div><div class="cl" style="top:249.17px;left:620.0px;width:545.9px"><span style="color:#808080;font-style:italic">//</span></div><div class="ln" style="top:265.00px;left:566.70px;width:40px;color:#237893">13</div><div class="pl" style="top:265.00px;left:607.3px">+</div><div class="cl" style="top:265.00px;left:620.0px;width:545.9px"><span style="color:#808080;font-style:italic">// The memory array `mem_core_array` has a depth of `DD` (256)</span></div><div class="ln" style="top:280.83px;left:566.70px;width:40px;color:#237893">14</div><div class="pl" style="top:280.83px;left:607.3px">+</div><div class="cl" style="top:280.83px;left:620.0px;width:545.9px"><span style="color:#808080;font-style:italic">// and a data width of `DW` (83). Each port has its own address,</span></div><div class="ln" style="top:296.67px;left:566.70px;width:40px;color:#237893">15</div><div class="pl" style="top:296.67px;left:607.3px">+</div><div class="cl" style="top:296.67px;left:620.0px;width:545.9px"><span style="color:#808080;font-style:italic">// write enable, and write data inputs, and a read data output.</span></div><div class="ln" style="top:312.50px;left:566.70px;width:40px;color:#237893">16</div><div class="pl" style="top:312.50px;left:607.3px">+</div><div class="cl" style="top:312.50px;left:620.0px;width:545.9px"><span style="color:#808080;font-style:italic">// The `pclk` signal clocks all read and write operations.</span></div><div class="ln" style="top:328.33px;left:566.70px;width:40px;color:#237893">17</div><div class="pl" style="top:328.33px;left:607.3px">+</div><div class="cl" style="top:328.33px;left:620.0px;width:545.9px"><span style="color:#808080;font-style:italic">//</span></div><div class="ln" style="top:344.17px;left:566.70px;width:40px;color:#237893">18</div><div class="pl" style="top:344.17px;left:607.3px">+</div><div class="cl" style="top:344.17px;left:620.0px;width:545.9px"><span style="color:#808080;font-style:italic">// The `add` port uses signals like `mem_addr_add`,</span></div><div class="ln" style="top:360.00px;left:566.70px;width:40px;color:#237893">19</div><div class="pl" style="top:360.00px;left:607.3px">+</div><div class="cl" style="top:360.00px;left:620.0px;width:545.9px"><span style="color:#808080;font-style:italic">// `mem_write_add`, and `mem_write_data_add`. The `age` port uses</span></div><div class="ln" style="top:375.83px;left:566.70px;width:40px;color:#237893">20</div><div class="pl" style="top:375.83px;left:607.3px">+</div><div class="cl" style="top:375.83px;left:620.0px;width:545.9px"><span style="color:#808080;font-style:italic">// signals like `mem_addr_age`, `mem_write_age`, and</span></div><div class="ln" style="top:391.67px;left:566.70px;width:40px;color:#237893">21</div><div class="pl" style="top:391.67px;left:607.3px">+</div><div class="cl" style="top:391.67px;left:620.0px;width:545.9px"><span style="color:#808080;font-style:italic">// `mem_write_data_age`. Each port's read data output,</span></div><div class="ln" style="top:407.50px;left:566.70px;width:40px;color:#237893">22</div><div class="pl" style="top:407.50px;left:607.3px">+</div><div class="cl" style="top:407.50px;left:620.0px;width:545.9px"><span style="color:#808080;font-style:italic">// `mem_read_data_add` and `mem_read_data_age`, provides the</span></div><div class="ln" style="top:423.33px;left:566.70px;width:40px;color:#237893">23</div><div class="pl" style="top:423.33px;left:607.3px">+</div><div class="cl" style="top:423.33px;left:620.0px;width:545.9px"><span style="color:#808080;font-style:italic">// data read from the memory array.</span></div><div class="ln" style="top:439.17px;left:566.70px;width:40px;color:#237893">24</div><div class="pl" style="top:439.17px;left:607.3px">+</div><div class="cl" style="top:439.17px;left:620.0px;width:545.9px"><span style="color:#808080;font-style:italic">//</span></div><div class="ln" style="top:455.00px;left:566.70px;width:40px;color:#237893">25</div><div class="pl" style="top:455.00px;left:607.3px">+</div><div class="cl" style="top:455.00px;left:620.0px;width:545.9px"><span style="color:#808080;font-style:italic">// The module is instantiated once in the `alut` module.</span></div><div class="ln" style="top:470.83px;left:566.70px;width:40px;color:#237893">26</div><div class="pl" style="top:470.83px;left:607.3px">+</div><div class="cl" style="top:470.83px;left:620.0px;width:545.9px"><span style="color:#808080;font-style:italic">//</span></div><div class="ln" style="top:486.67px;left:566.70px;width:40px;color:#237893">27</div><div class="pl" style="top:486.67px;left:607.3px">+</div><div class="cl" style="top:486.67px;left:620.0px;width:545.9px"><span style="color:#ff2000;font-style:italic">// !!!</span> <span style="color:#ff2000;font-weight:bold">note</span><span style="color:#ff2000;font-style:italic"> Dual-Port Operation</span></div><div class="ln" style="top:502.50px;left:566.70px;width:40px;color:#237893">28</div><div class="pl" style="top:502.50px;left:607.3px">+</div><div class="cl" style="top:502.50px;left:620.0px;width:545.9px"><span style="color:#808080;font-style:italic">// The module allows concurrent access to the memory array from</span></div><div class="ln" style="top:518.33px;left:566.70px;width:40px;color:#237893">29</div><div class="pl" style="top:518.33px;left:607.3px">+</div><div class="cl" style="top:518.33px;left:620.0px;width:545.9px"><span style="color:#808080;font-style:italic">// both the address checker and the age checker.</span></div><div class="ln" style="top:534.17px;left:566.70px;width:40px;color:#0b216f">30</div><div class="pl" style="top:534.17px;left:607.3px">+</div><div class="cl" style="top:534.17px;left:620.0px;width:545.9px"><span style="color:#ff2000;font-style:italic">// !!!</span></div><div class="ln" style="top:550.00px;left:566.70px;width:40px;color:#237893">31</div><div class="cl" style="top:550.00px;left:620.0px;width:545.9px"><span style="color:#800000;font-weight:bold">module</span> <span style="color:#0060b8;font-weight:bold">alut_mem</span></div><div class="ln" style="top:565.83px;left:566.70px;width:40px;color:#237893">32</div><div class="cl" style="top:565.83px;left:620.0px;width:545.9px"><span style="color:#4040ff">(</span></div><div class="ln" style="top:581.67px;left:566.70px;width:40px;color:#237893">33</div><div class="cl" style="top:581.67px;left:620.0px;width:545.9px">   <span style="color:#808080;font-style:italic">// Inputs</span></div><div class="ln" style="top:597.50px;left:566.70px;width:40px;color:#237893">34</div><div class="cl" style="top:597.50px;left:620.0px;width:545.9px">   <span style="color:#586a1e;font-style:italic">pclk</span>,</div><div class="ln" style="top:613.33px;left:566.70px;width:40px;color:#237893">35</div><div class="cl" style="top:613.33px;left:620.0px;width:545.9px">   <span style="color:#586a1e;font-style:italic">mem_addr_add</span>,</div><div class="ln" style="top:629.17px;left:566.70px;width:40px;color:#237893">36</div><div class="cl" style="top:629.17px;left:620.0px;width:545.9px">   <span style="color:#586a1e;font-style:italic">mem_write_add</span>,</div><div class="ln" style="top:645.00px;left:566.70px;width:40px;color:#237893">37</div><div class="cl" style="top:645.00px;left:620.0px;width:545.9px">   <span style="color:#586a1e;font-style:italic">mem_write_data_add</span>,</div><div class="ln" style="top:660.83px;left:566.70px;width:40px;color:#237893">38</div><div class="cl" style="top:660.83px;left:620.0px;width:545.9px">   <span style="color:#586a1e;font-style:italic">mem_addr_age</span>,</div><div class="ln" style="top:676.67px;left:566.70px;width:40px;color:#237893">39</div><div class="cl" style="top:676.67px;left:620.0px;width:545.9px">   <span style="color:#586a1e;font-style:italic">mem_write_age</span>,</div><div class="ln" style="top:692.50px;left:566.70px;width:40px;color:#237893">40</div><div class="cl" style="top:692.50px;left:620.0px;width:545.9px">   <span style="color:#586a1e;font-style:italic">mem_write_data_age</span>,</div><div class="ln" style="top:708.33px;left:566.70px;width:40px;color:#237893">41</div><div class="cl" style="top:708.33px;left:620.0px;width:545.9px"></div><div class="ln" style="top:724.17px;left:566.70px;width:40px;color:#237893">42</div><div class="cl" style="top:724.17px;left:620.0px;width:545.9px">   <span style="color:#586a1e;font-style:italic">mem_read_data_add</span>,</div><div class="ln" style="top:740.00px;left:566.70px;width:40px;color:#237893">43</div><div class="cl" style="top:740.00px;left:620.0px;width:545.9px">   <span style="color:#586a1e;font-style:italic">mem_read_data_age</span></div><div class="ln" style="top:755.83px;left:566.70px;width:40px;color:#237893">44</div><div class="cl" style="top:755.83px;left:620.0px;width:545.9px"><span style="color:#4040ff">)</span>;</div><div class="ln" style="top:771.67px;left:566.70px;width:40px;color:#237893">45</div><div class="cl" style="top:771.67px;left:620.0px;width:545.9px"></div><div class="ln" style="top:787.50px;left:566.70px;width:40px;color:#237893">46</div><div class="cl" style="top:787.50px;left:620.0px;width:545.9px">   <span style="color:#800000;font-weight:bold">parameter</span>   <span style="font-weight:bold">DW</span> = <span style="color:#0000ff">83</span>;          <span style="color:#808080;font-style:italic">// width of data busses</span></div><div class="ln" style="top:803.33px;left:566.70px;width:40px;color:#237893">47</div><div class="cl" style="top:803.33px;left:620.0px;width:545.9px">   <span style="color:#800000;font-weight:bold">parameter</span>   <span style="font-weight:bold">DD</span> = <span style="color:#0000ff">256</span>;         <span style="color:#808080;font-style:italic">// depth of RAM</span></div><div class="ln" style="top:819.17px;left:566.70px;width:40px;color:#237893">48</div><div class="cl" style="top:819.17px;left:620.0px;width:545.9px"></div><div class="ln" style="top:835.00px;left:566.70px;width:40px;color:#237893">49</div><div class="cl" style="top:835.00px;left:620.0px;width:545.9px">   <span style="color:#800000;font-weight:bold">input</span>              <span style="color:#586a1e;font-style:italic">pclk</span>;               <span style="color:#808080;font-style:italic">// APB clock</span></div><div class="ln" style="top:850.83px;left:566.70px;width:40px;color:#237893">50</div><div class="cl" style="top:850.83px;left:620.0px;width:545.9px">   <span style="color:#800000;font-weight:bold">input</span> <span style="color:#0070ff">[</span><span style="color:#0000ff">7</span>:<span style="color:#0000ff">0</span><span style="color:#0070ff">]</span>        <span style="color:#586a1e;font-style:italic">mem_addr_add</span>;       <span style="color:#808080;font-style:italic">// hash address for R/W to memory</span></div><div class="ln" style="top:866.66px;left:566.70px;width:40px;color:#237893">51</div><div class="cl" style="top:866.66px;left:620.0px;width:545.9px">   <span style="color:#800000;font-weight:bold">input</span>              <span style="color:#586a1e;font-style:italic">mem_write_add</span>;      <span style="color:#808080;font-style:italic">// R/W flag (write = high)</span></div><div class="ln" style="top:882.50px;left:566.70px;width:40px;color:#237893">52</div><div class="cl" style="top:882.50px;left:620.0px;width:545.9px">   <span style="color:#800000;font-weight:bold">input</span> <span style="color:#0070ff">[</span><span style="font-weight:bold">DW</span>-<span style="color:#0000ff">1</span>:<span style="color:#0000ff">0</span><span style="color:#0070ff">]</span>     <span style="color:#586a1e;font-style:italic">mem_write_data_add</span>; <span style="color:#808080;font-style:italic">// write data for memory</span></div><div class="ln" style="top:898.33px;left:566.70px;width:40px;color:#237893">53</div><div class="cl" style="top:898.33px;left:620.0px;width:545.9px">   <span style="color:#800000;font-weight:bold">input</span> <span style="color:#0070ff">[</span><span style="color:#0000ff">7</span>:<span style="color:#0000ff">0</span><span style="color:#0070ff">]</span>        <span style="color:#586a1e;font-style:italic">mem_addr_age</span>;       <span style="color:#808080;font-style:italic">// hash address for R/W to memory</span></div><div class="ln" style="top:914.16px;left:566.70px;width:40px;color:#237893">54</div><div class="cl" style="top:914.16px;left:620.0px;width:545.9px">   <span style="color:#800000;font-weight:bold">input</span>              <span style="color:#586a1e;font-style:italic">mem_write_age</span>;      <span style="color:#808080;font-style:italic">// R/W flag (write = high)</span></div><div class="ln" style="top:930.00px;left:566.70px;width:40px;color:#237893">55</div><div class="cl" style="top:930.00px;left:620.0px;width:545.9px">   <span style="color:#800000;font-weight:bold">input</span> <span style="color:#0070ff">[</span><span style="font-weight:bold">DW</span>-<span style="color:#0000ff">1</span>:<span style="color:#0000ff">0</span><span style="color:#0070ff">]</span>     <span style="color:#586a1e;font-style:italic">mem_write_data_age</span>; <span style="color:#808080;font-style:italic">// write data for memory</span></div><div class="ln" style="top:945.83px;left:566.70px;width:40px;color:#237893">56</div><div class="cl" style="top:945.83px;left:620.0px;width:545.9px"></div><div class="ln" style="top:961.66px;left:566.70px;width:40px;color:#237893">57</div><div class="cl" style="top:961.66px;left:620.0px;width:545.9px">   <span style="color:#800000;font-weight:bold">output</span> <span style="color:#0070ff">[</span><span style="font-weight:bold">DW</span>-<span style="color:#0000ff">1</span>:<span style="color:#0000ff">0</span><span style="color:#0070ff">]</span>    <span style="color:#586a1e;font-style:italic">mem_read_data_add</span>;  <span style="color:#808080;font-style:italic">// read data from mem</span></div><div class="r" style="left:662.60px;top:535.17px;width:1.40px;height:13.83px;background:#000000;"></div><div class="r" style="left:1128.00px;top:75.00px;width:1.00px;height:897.00px;background:rgba(0,0,0,0.06);"></div><div class="r" style="left:1128.00px;top:253.00px;width:12.00px;height:1.00px;background:#d0d0d0;"></div><div class="r" style="left:1140.00px;top:75.00px;width:25.00px;height:349.00px;background:#c1c1c1;"></div><div class="r" style="left:1152.00px;top:81.00px;width:13.00px;height:177.60px;background:#a1b17f;"></div><div class="t" style="left:1217.00px;top:76.64px;font-family:'Liberation Serif', serif;font-size:19.80px;line-height:23.76px;color:#333333;font-weight:bold;font-style:normal;letter-spacing:0.544px">Module alut_mem</div><div class="r" style="left:1391.40px;top:118.90px;width:337.80px;height:47.70px;background:#c8c8c8;border:2.2px solid #666666"></div><div class="r" style="left:1372.00px;top:130.00px;width:20.00px;height:1.30px;background:#555555;"></div><div class="r" style="left:1372.00px;top:152.70px;width:20.00px;height:1.30px;background:#555555;"></div><div class="t" style="left:1400.80px;top:126.04px;font-family:'Liberation Mono', monospace;font-size:13.00px;line-height:15.60px;color:#1a1a1a;font-weight:normal;font-style:normal">DW</div><div class="t" style="left:1400.80px;top:148.94px;font-family:'Liberation Mono', monospace;font-size:13.00px;line-height:15.60px;color:#1a1a1a;font-weight:normal;font-style:normal">DD</div><div class="r" style="left:1391.40px;top:173.00px;width:337.80px;height:160.80px;background:#fff2b3;border:3px solid #000000"></div><div class="r" style="left:1372.00px;top:184.55px;width:20.00px;height:1.30px;background:#555555;"></div><div class="t" style="left:1400.80px;top:179.14px;font-family:'Liberation Mono', monospace;font-size:13.00px;line-height:15.60px;color:#111111;font-weight:normal;font-style:normal">pclk</div><div class="t" style="right:555.50px;top:179.14px;font-family:'Liberation Mono', monospace;font-size:13.00px;line-height:15.60px;color:#6b6b6b;font-weight:normal;font-style:normal"><span style="color:#6b6b6b">logic</span></div><div class="r" style="left:1372.00px;top:206.35px;width:20.00px;height:3.00px;background:#000000;"></div><div class="t" style="left:1400.80px;top:201.79px;font-family:'Liberation Mono', monospace;font-size:13.00px;line-height:15.60px;color:#111111;font-weight:normal;font-style:normal">mem_addr_add</div><div class="t" style="right:555.50px;top:201.79px;font-family:'Liberation Mono', monospace;font-size:13.00px;line-height:15.60px;color:#6b6b6b;font-weight:normal;font-style:normal"><span style="color:#6b6b6b">logic</span><span style="color:#2e86c1">[7:0]</span></div><div class="r" style="left:1372.00px;top:229.85px;width:20.00px;height:1.30px;background:#555555;"></div><div class="t" style="left:1400.80px;top:224.44px;font-family:'Liberation Mono', monospace;font-size:13.00px;line-height:15.60px;color:#111111;font-weight:normal;font-style:normal">mem_write_add</div><div class="t" style="right:555.50px;top:224.44px;font-family:'Liberation Mono', monospace;font-size:13.00px;line-height:15.60px;color:#6b6b6b;font-weight:normal;font-style:normal"><span style="color:#6b6b6b">logic</span></div><div class="r" style="left:1372.00px;top:251.65px;width:20.00px;height:3.00px;background:#000000;"></div><div class="t" style="left:1400.80px;top:247.09px;font-family:'Liberation Mono', monospace;font-size:13.00px;line-height:15.60px;color:#111111;font-weight:normal;font-style:normal">mem_write_data_add</div><div class="t" style="right:555.50px;top:247.09px;font-family:'Liberation Mono', monospace;font-size:13.00px;line-height:15.60px;color:#6b6b6b;font-weight:normal;font-style:normal"><span style="color:#6b6b6b">logic</span><span style="color:#2e86c1">[DW-1:0]</span></div><div class="r" style="left:1372.00px;top:274.30px;width:20.00px;height:3.00px;background:#000000;"></div><div class="t" style="left:1400.80px;top:269.74px;font-family:'Liberation Mono', monospace;font-size:13.00px;line-height:15.60px;color:#111111;font-weight:normal;font-style:normal">mem_addr_age</div><div class="t" style="right:555.50px;top:269.74px;font-family:'Liberation Mono', monospace;font-size:13.00px;line-height:15.60px;color:#6b6b6b;font-weight:normal;font-style:normal"><span style="color:#6b6b6b">logic</span><span style="color:#2e86c1">[7:0]</span></div><div class="r" style="left:1372.00px;top:297.80px;width:20.00px;height:1.30px;background:#555555;"></div><div class="t" style="left:1400.80px;top:292.39px;font-family:'Liberation Mono', monospace;font-size:13.00px;line-height:15.60px;color:#111111;font-weight:normal;font-style:normal">mem_write_age</div><div class="t" style="right:555.50px;top:292.39px;font-family:'Liberation Mono', monospace;font-size:13.00px;line-height:15.60px;color:#6b6b6b;font-weight:normal;font-style:normal"><span style="color:#6b6b6b">logic</span></div><div class="r" style="left:1372.00px;top:319.60px;width:20.00px;height:3.00px;background:#000000;"></div><div class="t" style="left:1400.80px;top:315.04px;font-family:'Liberation Mono', monospace;font-size:13.00px;line-height:15.60px;color:#111111;font-weight:normal;font-style:normal">mem_write_data_age</div><div class="t" style="right:555.50px;top:315.04px;font-family:'Liberation Mono', monospace;font-size:13.00px;line-height:15.60px;color:#6b6b6b;font-weight:normal;font-style:normal"><span style="color:#6b6b6b">logic</span><span style="color:#2e86c1">[DW-1:0]</span></div><div class="r" style="left:1728.00px;top:183.70px;width:20.60px;height:3.00px;background:#000000;"></div><div class="t" style="right:200.40px;top:179.14px;font-family:'Liberation Mono', monospace;font-size:13.00px;line-height:15.60px;color:#111111;font-weight:normal;font-style:normal">mem_read_data_add</div><div class="t" style="left:1755.60px;top:179.14px;font-family:'Liberation Mono', monospace;font-size:13.00px;line-height:15.60px;color:#6b6b6b;font-weight:normal;font-style:normal"><span style="color:#6b6b6b">reg</span><span style="color:#2e86c1">[DW-1:0]</span></div><div class="r" style="left:1728.00px;top:206.35px;width:20.60px;height:3.00px;background:#000000;"></div><div class="t" style="right:200.40px;top:201.79px;font-family:'Liberation Mono', monospace;font-size:13.00px;line-height:15.60px;color:#111111;font-weight:normal;font-style:normal">mem_read_data_age</div><div class="t" style="left:1755.60px;top:201.79px;font-family:'Liberation Mono', monospace;font-size:13.00px;line-height:15.60px;color:#6b6b6b;font-weight:normal;font-style:normal"><span style="color:#6b6b6b">reg</span><span style="color:#2e86c1">[DW-1:0]</span></div><div class="t" style="left:1543.00px;transform:translateX(-50%);top:335.09px;font-family:'Liberation Sans', sans-serif;font-size:11.00px;line-height:13.20px;color:#555555;font-weight:normal;font-style:italic;letter-spacing:-0.271px">Block Diagram of alut_mem</div><div class="r" style="left:1864.00px;top:121.00px;width:17.00px;height:17.00px;background:transparent;border:1px solid #ececec;border-radius:3px"></div><svg style="left:1867.00px;top:124.00px" width="11" height="11" viewBox="0 0 11 11" fill="none" stroke="#cfcfcf" stroke-width="0.9" stroke-linecap="round" stroke-linejoin="round"><rect x="3" y="3" width="7" height="7" rx=".5"/><path d="M1 8V1.5A.5.5 0 0 1 1.5 1H8"/></svg><div class="t" style="left:1217.00px;top:375.08px;font-family:'Liberation Serif', serif;font-size:15.70px;line-height:18.84px;color:#333333;font-weight:bold;font-style:normal;letter-spacing:-0.356px">Description</div><div class="t" style="left:1217.00px;top:414.53px;font-size:13.60px;line-height:16.32px;color:#3c3c3c;letter-spacing:-0.250px">The <span class="ic">alut_mem</span> module implements a dual-ported memory array. It is used by the Address Lookup Table (ALUT) to</div><div class="t" style="left:1217.00px;top:437.13px;font-size:13.60px;line-height:16.32px;color:#3c3c3c;letter-spacing:-0.327px">store and retrieve data. The memory is accessed via two independent ports: <span class="ic">add</span> (address checker) and <span class="ic">age</span> (age</div><div class="t" style="left:1217.00px;top:458.73px;font-size:13.60px;line-height:16.32px;color:#3c3c3c;letter-spacing:-0.202px">checker). This allows simultaneous read/write operations on different addresses. The module's primary function is</div><div class="t" style="left:1217.00px;top:479.53px;font-size:13.60px;line-height:16.32px;color:#3c3c3c;letter-spacing:-0.234px">to provide a storage mechanism for address and age-related data within the ALUT.</div><div class="t" style="left:1217.00px;top:519.13px;font-size:13.60px;line-height:16.32px;color:#3c3c3c;letter-spacing:-0.270px">The memory array <span class="ic">mem_core_array</span> has a depth of <span class="ic">DD</span> (256) and a data width of <span class="ic">DW</span> (83). Each port has its own</div><div class="t" style="left:1217.00px;top:540.73px;font-size:13.60px;line-height:16.32px;color:#3c3c3c;letter-spacing:-0.251px">address, write enable, and write data inputs, and a read data output. The <span class="ic">pclk</span> signal clocks all read and write</div><div class="t" style="left:1217.00px;top:562.33px;font-size:13.60px;line-height:16.32px;color:#3c3c3c;letter-spacing:-0.206px">operations.</div><div class="t" style="left:1217.00px;top:603.43px;font-size:13.60px;line-height:16.32px;color:#3c3c3c;letter-spacing:-0.382px">The <span class="ic">add</span> port uses signals like <span class="ic">mem_addr_add</span>, <span class="ic">mem_write_add</span>, and <span class="ic">mem_write_data_add</span>. The <span class="ic">age</span> port uses signals</div><div class="t" style="left:1217.00px;top:625.03px;font-size:13.60px;line-height:16.32px;color:#3c3c3c;letter-spacing:-0.310px">like <span class="ic">mem_addr_age</span>, <span class="ic">mem_write_age</span>, and <span class="ic">mem_write_data_age</span>. Each port's read data output, <span class="ic">mem_read_data_add</span> and</div><div class="t" style="left:1217.00px;top:646.53px;font-size:13.60px;line-height:16.32px;color:#3c3c3c;letter-spacing:-0.210px"><span class="ic">mem_read_data_age</span>, provides the data read from the memory array.</div><div class="t" style="left:1217.00px;top:688.73px;font-size:13.60px;line-height:16.32px;color:#3c3c3c;letter-spacing:-0.213px">The module is instantiated once in the <span class="ic">alut</span> module.</div><div class="r" style="left:1217.00px;top:729.00px;width:668.40px;height:20.00px;background:#6aafde;"></div><div class="r" style="left:1217.00px;top:749.00px;width:668.40px;height:39.80px;background:#e8f2fa;"></div><div class="r" style="left:1226.80px;top:733.60px;width:9.40px;height:9.40px;background:#ffffff;border-radius:50%"></div><div class="r" style="left:1230.80px;top:735.10px;width:1.40px;height:4.30px;background:#6aafde;border-radius:0.6px"></div><div class="r" style="left:1230.80px;top:740.20px;width:1.40px;height:1.30px;background:#6aafde;border-radius:50%"></div><div class="t" style="left:1239.70px;top:731.02px;font-family:'Liberation Sans', sans-serif;font-size:11.60px;line-height:13.92px;color:#ffffff;font-weight:bold;font-style:normal;letter-spacing:-0.675px">Dual-Port Operation</div><div class="t" style="left:1227.00px;top:760.53px;font-size:13.60px;line-height:16.32px;color:#3c3c3c;letter-spacing:-0.257px">The module allows concurrent access to the memory array from both the address checker and the age checker.</div><div class="t" style="left:1542.70px;transform:translateX(-50%);top:818.66px;font-family:'Liberation Sans', sans-serif;font-size:10.50px;line-height:12.60px;color:#333333;font-weight:normal;font-style:italic;letter-spacing:-0.809px">Parameters</div><div class="r" style="left:1217.00px;top:840.00px;width:669.00px;height:86.20px;background:#fcfcfc;border:1px solid #dcdcdc"></div><div class="r" style="left:1218.00px;top:867.00px;width:667.00px;height:30.40px;background:#f2f5f5;"></div><div class="r" style="left:1217.00px;top:867.00px;width:669.00px;height:1.00px;background:#dcdcdc;"></div><div class="r" style="left:1217.00px;top:897.00px;width:669.00px;height:1.00px;background:#dcdcdc;"></div><div class="r" style="left:1377.00px;top:840.00px;width:1.00px;height:86.20px;background:#dcdcdc;"></div><div class="r" style="left:1537.00px;top:840.00px;width:1.00px;height:86.20px;background:#dcdcdc;"></div><div class="t" style="left:1297.50px;transform:translateX(-50%);top:845.83px;font-family:'Liberation Sans', sans-serif;font-size:11.80px;line-height:14.16px;color:#111111;font-weight:bold;font-style:normal;letter-spacing:-0.314px">Name</div><div class="t" style="left:1457.75px;transform:translateX(-50%);top:845.83px;font-family:'Liberation Sans', sans-serif;font-size:11.80px;line-height:14.16px;color:#111111;font-weight:bold;font-style:normal;letter-spacing:-0.081px">Default</div><div class="t" style="left:1711.40px;transform:translateX(-50%);top:845.83px;font-family:'Liberation Sans', sans-serif;font-size:11.80px;line-height:14.16px;color:#111111;font-weight:bold;font-style:normal;letter-spacing:-0.341px">Description</div><div class="t" style="left:1297.20px;transform:translateX(-50%);top:876.55px;font-family:'Liberation Sans', sans-serif;font-size:10.20px;line-height:12.24px;color:#333333;font-weight:normal;font-style:normal;letter-spacing:-0.184px">DW</div><div class="t" style="left:1457.50px;transform:translateX(-50%);top:874.93px;font-family:'Liberation Sans', sans-serif;font-size:11.80px;line-height:14.16px;color:#333333;font-weight:normal;font-style:normal;letter-spacing:0.675px">83</div><div class="t" style="left:1551.90px;top:874.97px;font-family:'Liberation Sans', sans-serif;font-size:10.60px;line-height:12.72px;color:#333333;font-weight:normal;font-style:normal;letter-spacing:-0.479px">width of data busses</div><div class="t" style="left:1297.20px;transform:translateX(-50%);top:906.35px;font-family:'Liberation Sans', sans-serif;font-size:10.20px;line-height:12.24px;color:#333333;font-weight:normal;font-style:normal;letter-spacing:-0.719px">DD</div><div class="t" style="left:1457.50px;transform:translateX(-50%);top:904.03px;font-family:'Liberation Sans', sans-serif;font-size:11.80px;line-height:14.16px;color:#333333;font-weight:normal;font-style:normal;letter-spacing:0.156px">256</div><div class="t" style="left:1551.90px;top:904.17px;font-family:'Liberation Sans', sans-serif;font-size:10.60px;line-height:12.72px;color:#333333;font-weight:normal;font-style:normal;letter-spacing:-0.435px">depth of RAM</div><div class="t" style="left:1542.70px;transform:translateX(-50%);top:955.15px;font-family:'Liberation Sans', sans-serif;font-size:10.20px;line-height:12.24px;color:#333333;font-weight:normal;font-style:italic;letter-spacing:-0.795px">Ports</div><div class="r" style="left:1904.00px;top:57.00px;width:13.00px;height:915.00px;background:#ffffff;"></div><div class="r" style="left:1906.00px;top:72.00px;width:11.00px;height:502.00px;background:#c1c1c1;"></div><svg style="left:1907.5px;top:63.3px" width="8" height="5" viewBox="0 0 8 5"><path d="M4 .4L8 5H0z" fill="#a3a3a3"/></svg><svg style="left:1907.5px;top:961.3px" width="8" height="5" viewBox="0 0 8 5"><path d="M0 0h8L4 4.6z" fill="#a3a3a3"/></svg><div class="r" style="left:1917.00px;top:28.00px;width:1.00px;height:962.00px;background:#fafafa;"></div><div class="r" style="left:1918.00px;top:0.00px;width:1.00px;height:991.00px;background:#111111;"></div><div class="r" style="left:0.00px;top:972.00px;width:1919.00px;height:18.00px;background:#007acc;"></div><div class="r" style="left:0.00px;top:972.00px;width:27.00px;height:18.00px;background:#16825d;"></div><div class="r" style="left:0.00px;top:990.00px;width:1919.00px;height:1.00px;background:#f8f8f8;"></div><svg style="left:0.00px;top:972.00px" width="27" height="18" viewBox="0 0 27 18" fill="none" stroke="#ffffff" stroke-width="0.9" stroke-linecap="round" stroke-linejoin="round"><path d="M9.1 6.3l4.3 3.1-4.3 3.3M16.9 3.3l-3.8 3.1 3.8 3.3"/></svg><svg style="left:34.00px;top:974.00px" width="24" height="12" viewBox="0 0 24 12" fill="none" stroke="#ffffff" stroke-width="0.9" stroke-linecap="round" stroke-linejoin="round"><path d="M1.2 10.8l1.2-3 1.6-.3 4.5-4.5c1.2-1.2 2.4-1.8 3.2-1.8 0 .8-.6 2-1.8 3.2L5.4 8.9l-.3 1.6z"/><path d="M2.5 5.2l2-.6M7 9.5l-.6 2"/><circle cx="9.6" cy="4.2" r=".7"/><path d="M13.2 10.8l.8-2.5 2.2-2.2M16.5 8.3l2.6-2.6c1-1 1.6-2.2 2-3.8-1.6.4-2.8 1-3.8 2l-1.5 1.5"/><circle cx="15.2" cy="8.6" r="1.2"/></svg><div class="t" style="left:60.00px;top:974.25px;font-family:'Liberation Sans', sans-serif;font-size:10.30px;line-height:12.36px;color:#ffffff;font-weight:normal;font-style:normal;letter-spacing:-0.371px">Launchpad</div><svg style="left:122.00px;top:975.50px" width="11" height="11" viewBox="0 0 11 11" fill="none" stroke="#ffffff" stroke-width="0.9" stroke-linecap="round" stroke-linejoin="round"><circle cx="5.5" cy="5.5" r="4.8"/><path d="M3.5 3.5l4 4M7.5 3.5l-4 4"/></svg><div class="t" style="left:136.00px;top:974.25px;font-family:'Liberation Sans', sans-serif;font-size:10.30px;line-height:12.36px;color:#ffffff;font-weight:normal;font-style:normal;letter-spacing:-0.734px">0</div><svg style="left:144.00px;top:975.30px" width="11" height="11" viewBox="0 0 11 11" fill="none" stroke="#ffffff" stroke-width="0.9" stroke-linecap="round" stroke-linejoin="round"><path d="M5.5 1L10.3 10H.7z M5.5 4.3v3M5.5 8.3v.4"/></svg><div class="t" style="left:159.00px;top:974.25px;font-family:'Liberation Sans', sans-serif;font-size:10.30px;line-height:12.36px;color:#ffffff;font-weight:normal;font-style:normal;letter-spacing:-1.609px">1K</div><svg style="left:184.50px;top:975.50px" width="9" height="11" viewBox="0 0 9 11" fill="none" stroke="#ffffff" stroke-width="0.9" stroke-linecap="round" stroke-linejoin="round"><circle cx="4.5" cy="4.5" r="1"/><path d="M4.5 5.5L2.5 10.5M4.5 5.5l2 5M1.8 2a3.5 3.5 0 0 0 0 5M7.2 2a3.5 3.5 0 0 1 0 5"/></svg><div class="t" style="left:197.50px;top:974.25px;font-family:'Liberation Sans', sans-serif;font-size:10.30px;line-height:12.36px;color:#ffffff;font-weight:normal;font-style:normal;letter-spacing:-1.734px">0</div><div class="t" style="left:216.50px;top:974.25px;font-family:'Liberation Sans', sans-serif;font-size:10.30px;line-height:12.36px;color:#ffffff;font-weight:normal;font-style:normal;letter-spacing:-0.114px">SonarLint branch: master</div><svg style="left:344.50px;top:976.50px" width="9" height="9" viewBox="0 0 9 9" fill="none" stroke="#ffffff" stroke-width="1" stroke-linecap="round" stroke-linejoin="round"><path d="M.5 1h8M2 4.5h5M3.5 8h2"/></svg><div class="t" style="left:356.00px;top:974.25px;font-family:'Liberation Sans', sans-serif;font-size:10.30px;line-height:12.36px;color:#ffffff;font-weight:normal;font-style:normal;letter-spacing:0.250px">On</div><svg style="left:383.50px;top:975.50px" width="11" height="10" viewBox="0 0 11 10" fill="none" stroke="#ffffff" stroke-width="0.9" stroke-linecap="round" stroke-linejoin="round"><path d="M.6 1h9M3 4h6.5M3 6.5h6.5M3 9h6.5M.6 1v8"/></svg><svg style="left:397.5px;top:976.5px" width="5" height="9" viewBox="0 0 5 9"><path d="M0 0L5 4.5 0 9z" fill="#fff"/></svg><svg style="left:470.0px;top:976.5px" width="5" height="9" viewBox="0 0 5 9"><path d="M0 0L5 4.5 0 9z" fill="#fff"/></svg><svg style="left:509.0px;top:976.5px" width="5" height="9" viewBox="0 0 5 9"><path d="M0 0L5 4.5 0 9z" fill="#fff"/></svg><div class="t" style="left:407.00px;top:974.25px;font-family:'Liberation Sans', sans-serif;font-size:10.30px;line-height:12.36px;color:#ffffff;font-weight:normal;font-style:normal;letter-spacing:-0.069px">i_alut_veneer</div><div class="t" style="left:480.00px;top:974.25px;font-family:'Liberation Sans', sans-serif;font-size:10.30px;line-height:12.36px;color:#ffffff;font-weight:normal;font-style:normal;letter-spacing:0.075px">i_alut</div><div class="t" style="left:516.50px;top:974.25px;font-family:'Liberation Sans', sans-serif;font-size:10.30px;line-height:12.36px;color:#ffffff;font-weight:normal;font-style:normal;letter-spacing:-0.082px">i_alut_mem</div><div class="t" style="left:582.50px;top:974.25px;font-family:'Liberation Sans', sans-serif;font-size:10.30px;line-height:12.36px;color:#ffffff;font-weight:normal;font-style:normal;letter-spacing:-0.100px">SonarLint focus: overall code</div><svg style="left:1280.00px;top:973.60px" width="12" height="13" viewBox="0 0 12 13" fill="none" stroke="#ffffff" stroke-width="0.9" stroke-linecap="round" stroke-linejoin="round"><rect x="1.5" y="3.5" width="9" height="8" rx="1.5"/><path d="M6 1v2.5M4 7v.5M8 7v.5M4.5 9.5h3"/></svg><div class="t" style="left:1295.00px;top:974.25px;font-family:'Liberation Sans', sans-serif;font-size:10.30px;line-height:12.36px;color:#ffffff;font-weight:normal;font-style:normal;letter-spacing:-0.079px">gemini-2.0-flash (google)</div><svg style="left:1420.00px;top:975.00px" width="11" height="11" viewBox="0 0 11 11" fill="none" stroke="#ffffff" stroke-width="0.8" stroke-linecap="round" stroke-linejoin="round"><circle cx="5.5" cy="5.5" r="1.6"/><path d="M4.6 .6h1.8l.4 1.4 1.1.6 1.4-.5.9 1.6-1.1 1v1.6l1.1 1-.9 1.6-1.4-.5-1.1.6-.4 1.4H4.6l-.4-1.4-1.1-.6-1.4.5-.9-1.6 1.1-1V4.7L.8 3.7l.9-1.6 1.4.5 1.1-.6z"/></svg><div class="t" style="left:1435.00px;top:974.25px;font-family:'Liberation Sans', sans-serif;font-size:10.30px;line-height:12.36px;color:#ffffff;font-weight:normal;font-style:normal;letter-spacing:-0.005px">uvm_ref_flow_1.1</div><svg style="left:1518.00px;top:976.00px" width="11" height="9" viewBox="0 0 11 9" fill="none" stroke="#ffffff" stroke-width="1" stroke-linecap="round" stroke-linejoin="round"><path d="M.8 4.5h9M6 .8l3.8 3.7L6 8.2"/></svg><div class="t" style="left:1533.00px;top:974.25px;font-family:'Liberation Sans', sans-serif;font-size:10.30px;line-height:12.36px;color:#ffffff;font-weight:normal;font-style:normal;letter-spacing:0.346px">default</div><div class="r" style="left:1578.80px;top:974.60px;width:12.00px;height:12.00px;background:#ffffff;border-radius:50%"></div><div class="r" style="left:1597.00px;top:972.00px;width:29.00px;height:19.00px;background:#004879;"></div><svg style="left:1605.00px;top:974.60px" width="12" height="12" viewBox="0 0 12 12" fill="none" stroke="#ffffff" stroke-width="1" stroke-linecap="round" stroke-linejoin="round"><circle cx="5" cy="5" r="4"/><path d="M8 8l3 3M3 5h4"/></svg><div class="t" style="left:1632.50px;top:974.25px;font-family:'Liberation Sans', sans-serif;font-size:10.30px;line-height:12.36px;color:#ffffff;font-weight:normal;font-style:normal;letter-spacing:-0.366px">Ln 30, Col 7</div><div class="t" style="left:1698.00px;top:974.25px;font-family:'Liberation Sans', sans-serif;font-size:10.30px;line-height:12.36px;color:#ffffff;font-weight:normal;font-style:normal;letter-spacing:-0.600px">Spaces: 3</div><div class="t" style="left:1753.00px;top:974.25px;font-family:'Liberation Sans', sans-serif;font-size:10.30px;line-height:12.36px;color:#ffffff;font-weight:normal;font-style:normal;letter-spacing:-0.793px">UTF-8</div><div class="t" style="left:1792.50px;top:974.25px;font-family:'Liberation Sans', sans-serif;font-size:10.30px;line-height:12.36px;color:#ffffff;font-weight:normal;font-style:normal;letter-spacing:-1.931px">LF</div><div class="t" style="left:1817.00px;top:974.25px;font-family:'Liberation Sans', sans-serif;font-size:10.30px;line-height:12.36px;color:#ffffff;font-weight:normal;font-style:normal;letter-spacing:-0.152px">SystemVerilog</div><svg style="left:1894.00px;top:974.50px" width="14" height="13" viewBox="0 0 14 13" fill="none" stroke="#ffffff" stroke-width="1" stroke-linecap="round" stroke-linejoin="round"><path d="M2 10.5h9M3 10.5V6.5a3.5 3.5 0 0 1 7 0v4M5.5 12h2"/></svg><div class="r" style="left:1902.00px;top:974.00px;width:5.00px;height:5.00px;background:#ffffff;border-radius:50%"></div><div class="r" style="left:1918.00px;top:0.00px;width:1.00px;height:991.00px;background:#111111;"></div></body></html>
